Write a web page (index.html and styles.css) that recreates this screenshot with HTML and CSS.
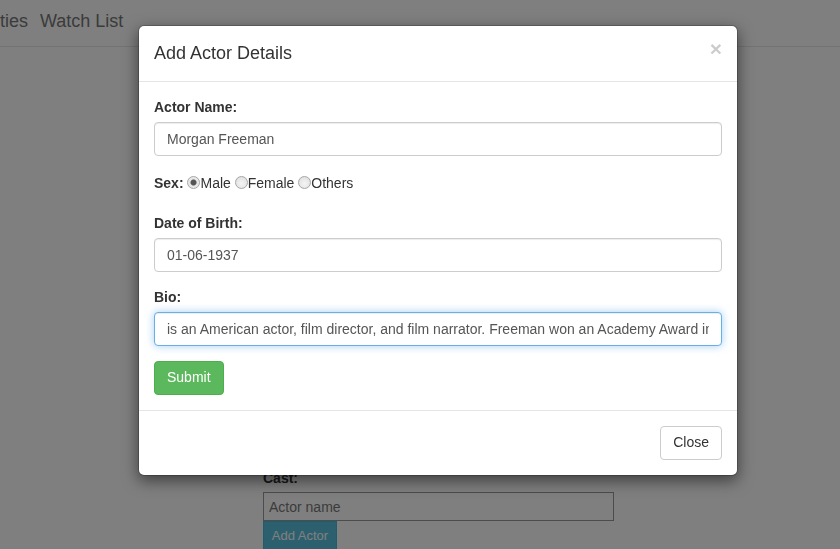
FILE: index.html
```html
<!DOCTYPE html>
<html>
<head>
<meta charset="utf-8">
<link rel="stylesheet" href="styles.css">
</head>
<body>
<div class="page">
  <nav class="navbar">
    <a class="nav-link nav-cut">ties</a>
    <a class="nav-link">Watch List</a>
  </nav>
  <div class="content">
    <label class="cast-label">Cast:</label>
    <input class="cast-input" type="text" placeholder="Actor name">
    <button class="btn-info">Add Actor</button>
  </div>
</div>
<div class="backdrop"></div>
<div class="modal">
  <div class="modal-header">
    <h4 class="modal-title">Add Actor Details</h4>
    <span class="close">&times;</span>
  </div>
  <div class="modal-body">
    <div class="form-group">
      <label class="lbl">Actor Name:</label>
      <input class="form-control" type="text" value="Morgan Freeman">
    </div>
    <div class="form-group sex-row">
      <label class="lbl-inline">Sex:</label> <input type="radio" name="sex" checked>Male <input type="radio" name="sex">Female <input type="radio" name="sex">Others
    </div>
    <div class="form-group">
      <label class="lbl">Date of Birth:</label>
      <input class="form-control" type="text" value="01-06-1937">
    </div>
    <div class="form-group">
      <label class="lbl">Bio:</label>
      <input class="form-control focused" type="text" value="is an American actor, film director, and film narrator. Freeman won an Academy Award in 2005 for Best Supporting Actor">
    </div>
    <button class="btn btn-success">Submit</button>
  </div>
  <div class="modal-footer">
    <button class="btn btn-default">Close</button>
  </div>
</div>
</body>
</html>
```
FILE: styles.css
```css
* { box-sizing: border-box; }
html, body { margin: 0; padding: 0; }
body {
  width: 840px;
  height: 549px;
  overflow: hidden;
  background: #fff;
  font-family: "Liberation Sans", Arial, Helvetica, sans-serif;
  font-size: 14px;
  line-height: 1.42857;
  color: #333;
}
.navbar {
  height: 47px;
  border-bottom: 1px solid #e7e7e7;
  display: flex;
  align-items: center;
  gap: 12px;
  padding-bottom: 2px;
}
.nav-link {
  font-size: 18px;
  color: #777;
}
.nav-cut { margin-left: 0; }
.content {
  padding: 421px 0 0 263px;
  display: flex;
  flex-direction: column;
  align-items: flex-start;
}
.cast-label {
  font-weight: bold;
  line-height: 20px;
  margin-bottom: 4px;
}
.cast-input {
  width: 351px;
  height: 29px;
  border: 1px solid #999;
  font-family: "Liberation Sans", Arial, sans-serif;
  font-size: 14px;
  padding: 0 5px;
  margin: 0;
}
.cast-input::placeholder { color: #777; }
.btn-info {
  background: #5bc0de;
  border: 1px solid #46b8da;
  color: #fff;
  font-family: "Liberation Sans", Arial, sans-serif;
  font-size: 13px;
  line-height: 18px;
  padding: 5px 0 0;
  width: 74px;
  height: 34px;
  margin: 0;
  border-radius: 0;
  white-space: nowrap;
  display: flex;
  justify-content: center;
  align-items: flex-start;
}
.backdrop {
  position: fixed;
  inset: 0;
  background: rgba(0,0,0,0.5);
}
.modal {
  position: absolute;
  top: 25px;
  left: 138px;
  width: 600px;
  background: #fff;
  border: 1px solid rgba(0,0,0,0.2);
  border-radius: 6px;
  box-shadow: 0 5px 15px rgba(0,0,0,0.5);
  background-clip: padding-box;
}
.modal-header {
  padding: 15px;
  border-bottom: 1px solid #e5e5e5;
  display: flex;
  justify-content: space-between;
  align-items: flex-start;
}
.modal-title {
  margin: 0;
  font-size: 18px;
  font-weight: 500;
  line-height: 25px;
  color: #333;
}
.close {
  font-size: 21px;
  font-weight: bold;
  line-height: 1;
  color: #000;
  opacity: 0.2;
  margin-top: -3px;
}
.modal-body {
  padding: 15px;
}
.form-group {
  margin-bottom: 15px;
}
.lbl {
  display: block;
  font-weight: bold;
  padding-top: 1px;
  margin-bottom: 4px;
}
.lbl-inline { font-weight: bold; }
.sex-row {
  height: 27px;
  padding-top: 3px;
}
.sex-row input[type=radio] {
  -webkit-appearance: none;
  appearance: none;
  width: 13px;
  height: 13px;
  margin: 0;
  border: 1px solid #a6a6a6;
  border-radius: 50%;
  background: radial-gradient(circle at 50% 60%, #f4f4f4 0%, #dcdcdc 100%);
  vertical-align: -1px;
  position: relative;
}
.sex-row input[type=radio]:checked {
  background: radial-gradient(circle, #555 0, #555 2.5px, #e6e6e6 3.5px, #f0f0f0 100%);
}
.form-control {
  display: block;
  width: 100%;
  height: 34px;
  padding: 6px 12px;
  font-family: "Liberation Sans", Arial, sans-serif;
  font-size: 14px;
  color: #555;
  background: #fff;
  border: 1px solid #ccc;
  border-radius: 4px;
  box-shadow: inset 0 1px 1px rgba(0,0,0,0.075);
  margin: 0;
  outline: none;
}
.form-control.focused {
  border-color: #66afe9;
  box-shadow: inset 0 1px 1px rgba(0,0,0,0.075), 0 0 8px rgba(102,175,233,0.6);
}
.btn {
  display: inline-block;
  height: 34px;
  padding: 6px 12px;
  font-family: "Liberation Sans", Arial, sans-serif;
  font-size: 14px;
  line-height: 1.42857;
  border: 1px solid transparent;
  border-radius: 4px;
  margin: 0;
}
.btn-success {
  color: #fff;
  background: #5cb85c;
  border-color: #4cae4c;
}
.btn-default {
  color: #333;
  background: #fff;
  border-color: #ccc;
}
.modal-footer {
  padding: 15px;
  border-top: 1px solid #e5e5e5;
  display: flex;
  justify-content: flex-end;
}
```
